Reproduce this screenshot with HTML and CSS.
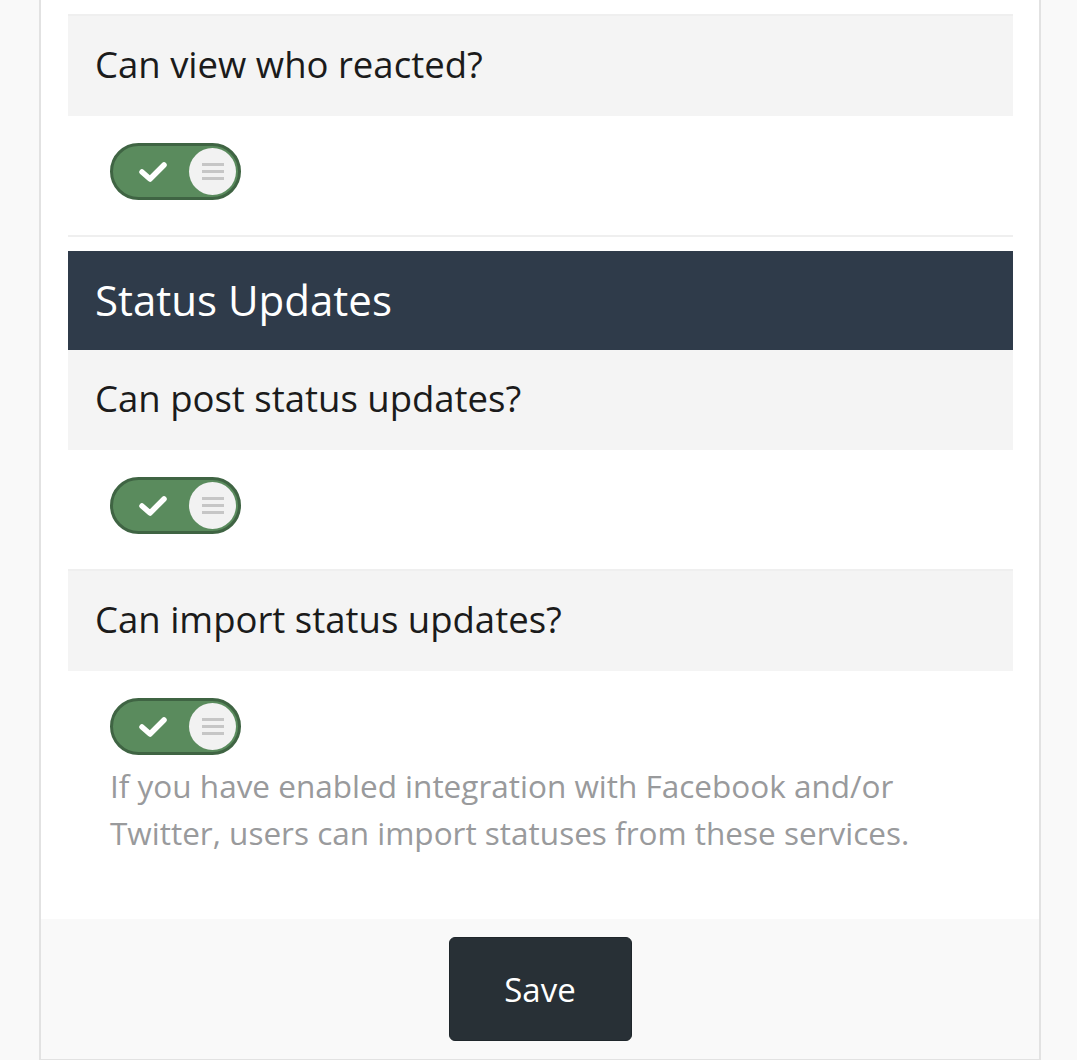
FILE: index.html
```html
<!DOCTYPE html>
<html lang="en">
<head>
    <meta charset="UTF-8">
    <meta name="viewport" content="width=device-width, initial-scale=1.0">
    <title>Privacy settings</title>
    <link rel="stylesheet" href="styles.css">
</head>
<body>

    <div class="card">
        <div class="card-body">
            <div class="setting">
                <div class="setting-label">Can view who reacted?</div>
                <div class="setting-control">
                    <span class="toggle">
                        <svg class="check" viewBox="0 0 28 20" width="28" height="20"><path d="M3 10 L11 17 L25 3" fill="none" stroke="#fff" stroke-width="5.5" stroke-linecap="round" stroke-linejoin="round"/></svg>
                        <span class="knob"><i></i><i></i><i></i></span>
                    </span>
                </div>
            </div>

            <div class="divider"></div>

            <h2 class="group-title">Status Updates</h2>

            <div class="setting">
                <div class="setting-label first">Can post status updates?</div>
                <div class="setting-control">
                    <span class="toggle">
                        <svg class="check" viewBox="0 0 28 20" width="28" height="20"><path d="M3 10 L11 17 L25 3" fill="none" stroke="#fff" stroke-width="5.5" stroke-linecap="round" stroke-linejoin="round"/></svg>
                        <span class="knob"><i></i><i></i><i></i></span>
                    </span>
                </div>
            </div>

            <div class="setting">
                <div class="setting-label">Can import status updates?</div>
                <div class="setting-control with-help">
                    <span class="toggle">
                        <svg class="check" viewBox="0 0 28 20" width="28" height="20"><path d="M3 10 L11 17 L25 3" fill="none" stroke="#fff" stroke-width="5.5" stroke-linecap="round" stroke-linejoin="round"/></svg>
                        <span class="knob"><i></i><i></i><i></i></span>
                    </span>
                    <p class="help">If you have enabled integration with Facebook and/or Twitter, users can import statuses from these services.</p>
                </div>
            </div>
        </div>

        <div class="card-footer">
            <button class="btn-save">Save</button>
        </div>
    </div>

</body>
</html>
```

FILE: styles.css
```css
body {
    background-color: #f9f9f9;
    font-family: 'Open Sans', 'Noto Sans', sans-serif;
    color: #1b1b1b;
    margin: 0;
    padding: 0;
}
.card {
    background: #ffffff;
    margin-left: 39px;
    width: 998px;
    border-left: 2px solid #e2e2e2;
    border-right: 2px solid #e2e2e2;
    border-bottom: 2px solid #e2e2e2;
}
.card-body {
    padding: 14px 26px 0 27px;
}
.setting-label {
    background-color: #f4f4f4;
    border-top: 2px solid #efefef;
    box-sizing: border-box;
    height: 102px;
    padding: 0 0 4px 27px;
    font-size: 36.5px;
    display: flex;
    align-items: center;
}
.setting-label.first {
    border-top: none;
    height: 100px;
}
.setting-control {
    padding: 27px 42px 35px 42px;
}
.setting-control.with-help {
    padding-bottom: 63px;
}
.toggle {
    display: flex;
    align-items: center;
    box-sizing: border-box;
    width: 131px;
    height: 57px;
    border: 3px solid #3f6443;
    border-radius: 29px;
    background-color: #5a8b5d;
    position: relative;
}
.check {
    margin-left: 26px;
}
.knob {
    position: absolute;
    right: 2px;
    top: 2px;
    width: 47px;
    height: 47px;
    border-radius: 50%;
    background-color: #f2f2f2;
    display: flex;
    flex-direction: column;
    align-items: center;
    justify-content: center;
    gap: 4px;
}
.knob i {
    display: block;
    width: 22px;
    height: 3px;
    background-color: #c6c6c6;
}
.help {
    margin: 7px 0 0 0;
    font-size: 31.5px;
    line-height: 47px;
    color: #999a9c;
}
.divider {
    height: 2px;
    background-color: #efefef;
    margin-bottom: 14px;
}
.group-title {
    margin: 0;
    height: 99px;
    background-color: #2f3b4a;
    color: #ffffff;
    font-size: 42px;
    font-weight: normal;
    padding: 0 0 2px 27px;
    box-sizing: border-box;
    display: flex;
    align-items: center;
}
.card-footer {
    background-color: #f9f9f9;
    padding: 18px 0 18px 0;
    text-align: center;
}
.btn-save {
    background-color: #283036;
    border: 1px solid #1f262b;
    color: #ffffff;
    width: 183px;
    height: 104px;
    border-radius: 6px;
    font-family: 'Open Sans', 'Noto Sans', sans-serif;
    font-size: 33px;
    cursor: pointer;
}
```
